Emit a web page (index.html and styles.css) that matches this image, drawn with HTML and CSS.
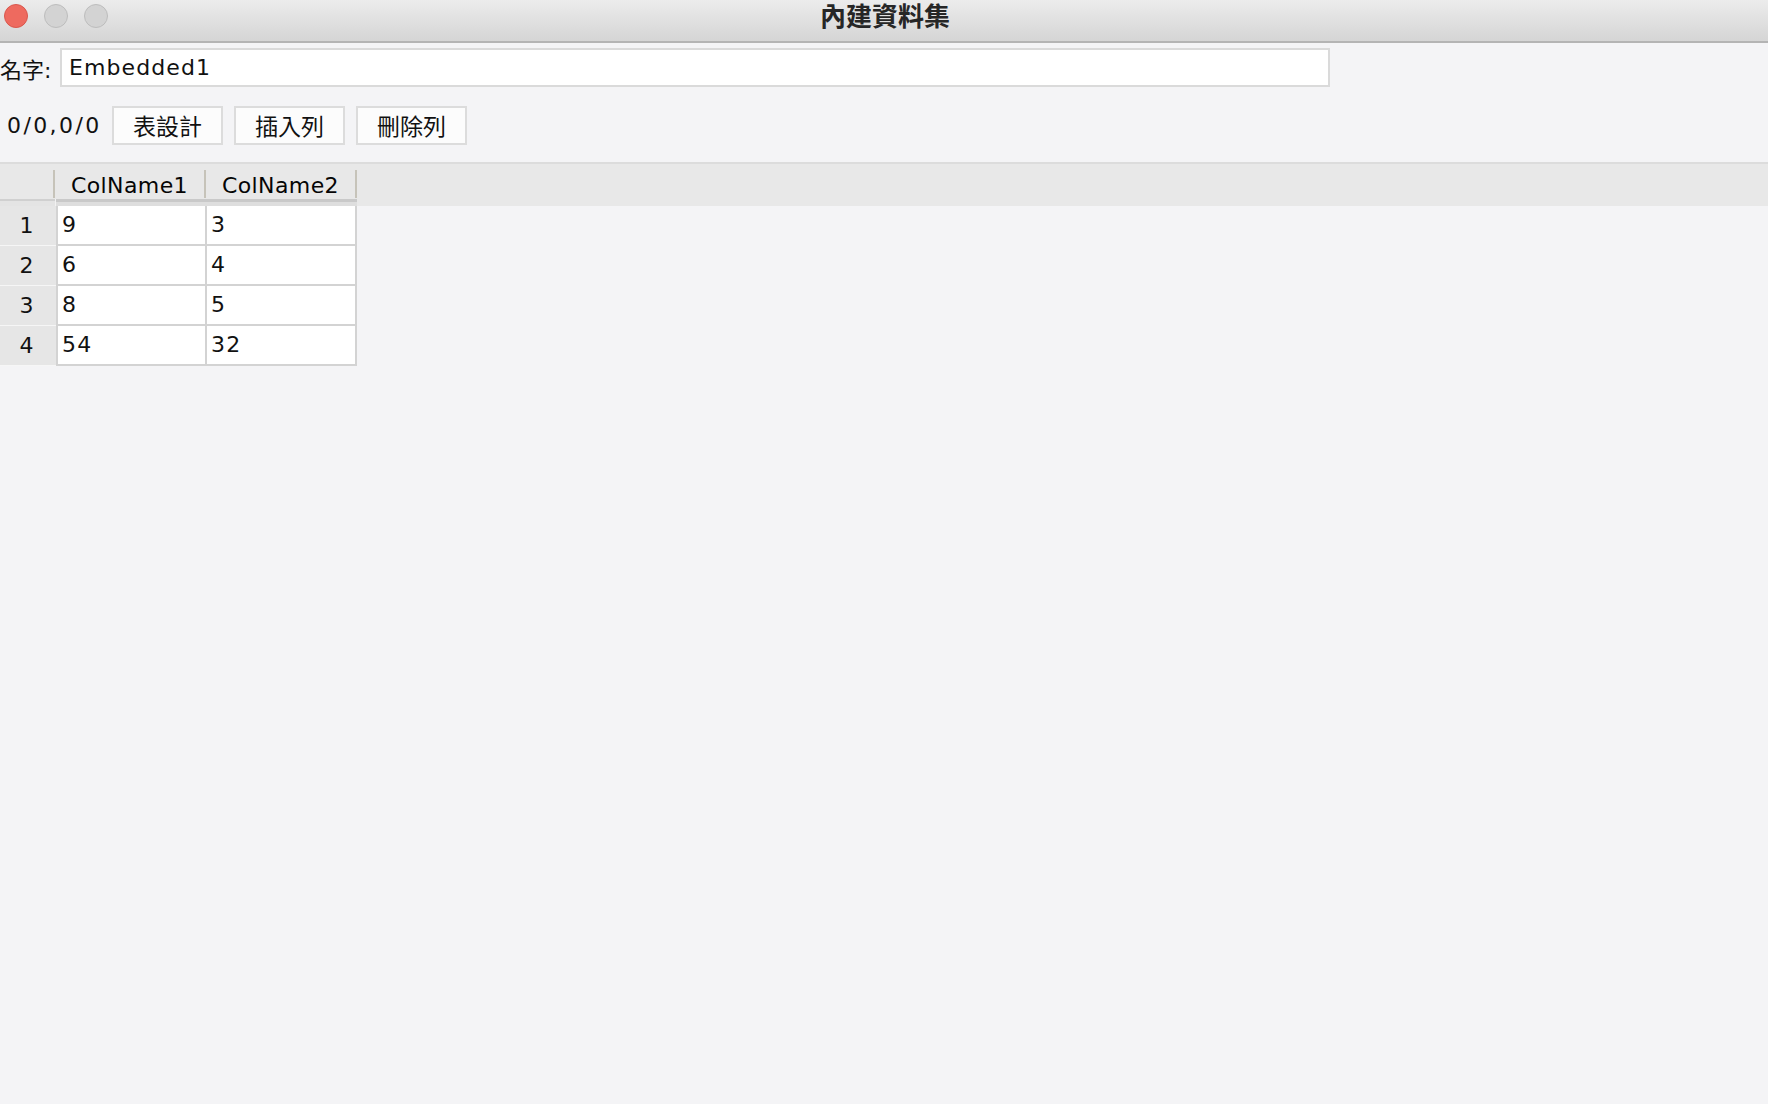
FILE: index.html
```html
<!DOCTYPE html>
<html lang="zh-Hant">
<head>
<meta charset="utf-8">
<title>內建資料集</title>
<link rel="stylesheet" href="styles.css">
</head>
<body>
<div class="window">
  <div class="titlebar">
    <div class="lights">
      <span class="light red"></span>
      <span class="light grey"></span>
      <span class="light grey"></span>
    </div>
    <div class="title">內建資料集</div>
  </div>

  <div class="name-row">
    <label class="name-label">名字:</label>
    <div class="name-field">Embedded1</div>
  </div>

  <div class="toolbar">
    <span class="pos">0/0,0/0</span>
    <button class="btn">表設計</button>
    <button class="btn">插入列</button>
    <button class="btn">刪除列</button>
  </div>

  <div class="table">
    <div class="thead">
      <div class="hrow">
        <div class="hcorner"></div>
        <div class="hsep"></div>
        <div class="hcell">ColName1</div>
        <div class="hsep"></div>
        <div class="hcell">ColName2</div>
        <div class="hsep"></div>
        <div class="hrest"></div>
      </div>
      <div class="hband">
        <div class="band-corner"></div>
        <div class="band-cols"></div>
        <div class="band-rest"></div>
      </div>
    </div>
    <div class="tbody">
      <div class="row"><div class="rh">1</div><div class="cell c1">9</div><div class="cell c2">3</div></div>
      <div class="row"><div class="rh">2</div><div class="cell c1">6</div><div class="cell c2">4</div></div>
      <div class="row"><div class="rh">3</div><div class="cell c1">8</div><div class="cell c2">5</div></div>
      <div class="row"><div class="rh">4</div><div class="cell c1">54</div><div class="cell c2">32</div></div>
    </div>
  </div>
</div>
</body>
</html>
```
FILE: styles.css
```css
html, body {
  margin: 0;
  padding: 0;
  height: 100%;
}
body {
  background: #f4f4f6;
  font-family: "DejaVu Sans", "Noto Sans CJK TC", sans-serif;
  font-size: 22px;
  color: #111;
  overflow: hidden;
}
.window {
  width: 1768px;
  height: 1104px;
  display: flex;
  flex-direction: column;
}
.titlebar {
  height: 41px;
  border-bottom: 2px solid #b4b4b4;
  background: linear-gradient(#ececec, #d5d5d5);
  display: flex;
  align-items: center;
  position: relative;
  flex-shrink: 0;
}
.lights {
  display: flex;
  gap: 16px;
  padding-left: 4px;
  margin-top: -9px;
}
.light {
  width: 24px;
  height: 24px;
  border-radius: 50%;
  box-sizing: border-box;
}
.light.red {
  background: #ee6a5f;
  border: 1px solid #d9574d;
}
.light.grey {
  background: #d3d3d3;
  border: 1px solid #bdbdbd;
}
.title {
  position: absolute;
  left: 0;
  right: 0;
  top: 0;
  text-align: center;
  font-family: "Noto Sans CJK TC", sans-serif;
  font-weight: 700;
  font-size: 26px;
  line-height: 29px;
  color: #262626;
  padding-left: 2px;
}
.name-row {
  display: flex;
  align-items: center;
  margin-top: 5px;
  height: 39px;
}
.name-label {
  width: 60px;
  font-size: 22px;
  white-space: nowrap;
}
.name-field {
  width: 1270px;
  height: 39px;
  box-sizing: border-box;
  background: #fff;
  border: 2px solid #dadada;
  padding-left: 7px;
  line-height: 35px;
  font-size: 22px;
  letter-spacing: 1.1px;
  color: #111;
}
.toolbar {
  display: flex;
  align-items: center;
  margin-top: 19px;
  height: 39px;
  padding-left: 7px;
}
.pos {
  width: 105px;
  letter-spacing: 2.4px;
  font-size: 22px;
}
.btn {
  width: 111px;
  height: 39px;
  margin-right: 11px;
  box-sizing: border-box;
  background: #fcfcfc;
  border: 2px solid #dcdcdc;
  border-radius: 0;
  font-family: "Noto Sans CJK TC", sans-serif;
  font-size: 23px;
  color: #111;
  padding: 0;
  line-height: 33px;
}
.table {
  margin-top: 17px;
  display: flex;
  flex-direction: column;
}
.thead {
  border-top: 2px solid #dcdcdc;
  background: #e8e8e8;
  height: 42px;
  display: flex;
  flex-direction: column;
}
.hrow {
  display: flex;
  height: 35px;
  align-items: flex-end;
}
.hcorner {
  width: 53px;
  height: 35px;
}
.hsep {
  width: 2px;
  height: 28px;
  background: #c6c3b9;
  margin-bottom: 1px;
}
.hcell {
  width: 149px;
  height: 35px;
  box-sizing: border-box;
  padding-top: 5px;
  text-align: center;
  line-height: 34px;
  font-size: 22px;
  letter-spacing: 0.4px;
  color: #050505;
}
.hrest {
  flex: 1;
}
.hband {
  display: flex;
  height: 7px;
}
.band-corner {
  width: 56px;
  background: linear-gradient(#d0d0d0 0, #d0d0d0 2px, #e4e4e4 2px);
  border-right: 1px solid #f2f2f2;
  box-sizing: border-box;
}
.band-cols {
  width: 301px;
  background: linear-gradient(#c9c9c9 0, #c9c9c9 3px, #dedede 3px);
}
.band-rest {
  flex: 1;
  background: #e8e8e8;
}
.tbody {
  display: flex;
  flex-direction: column;
}
.row {
  display: flex;
  height: 40px;
}
.rh {
  width: 56px;
  background: #e6e6e6;
  border-bottom: 1px solid #f6f6f6;
  box-sizing: border-box;
  text-align: center;
  padding-right: 3px;
  line-height: 39px;
  font-size: 22px;
}
.cell {
  background: #fff;
  border-left: 2px solid #d3d3d3;
  border-bottom: 2px solid #d3d3d3;
  box-sizing: border-box;
  padding-left: 4px;
  line-height: 38px;
  font-size: 22px;
  letter-spacing: 1.2px;
}
.c1 {
  width: 149px;
}
.c2 {
  width: 152px;
  border-right: 2px solid #d3d3d3;
}
```
